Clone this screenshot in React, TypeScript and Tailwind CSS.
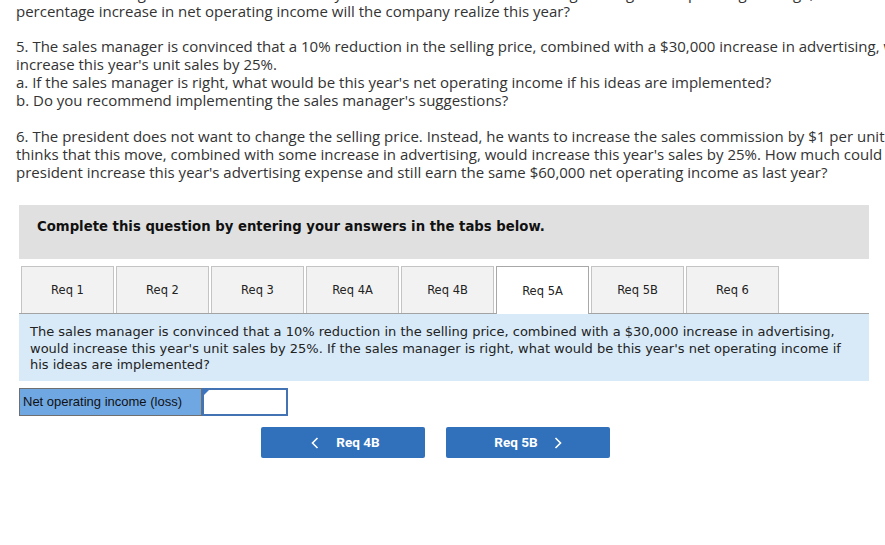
const tabs = ["Req 1", "Req 2", "Req 3", "Req 4A", "Req 4B", "Req 5A", "Req 5B", "Req 6"];
const active = "Req 5A";

function Chevron({ dir }: { dir: "left" | "right" }) {
  return (
    <svg width="8" height="12" viewBox="0 0 8 12" aria-hidden>
      <polyline
        points={dir === "left" ? "6.5,1 1.5,6 6.5,11" : "1.5,1 6.5,6 1.5,11"}
        fill="none"
        stroke="white"
        strokeWidth="1.6"
      />
    </svg>
  );
}

export default function App() {
  return (
    <div className="h-[545px] w-[885px] overflow-hidden bg-white">
      {/* Problem text */}
      <div className="-mt-[16px] whitespace-nowrap pl-4 font-['Open_Sans',Arial,sans-serif] text-[15px] leading-[18px] text-[#333]">
        <div>4. Refer to the original data. Assume that this year's sales increase by 20%. Using the degree of operating leverage, what</div>
        <div>percentage increase in net operating income will the company realize this year?</div>
        <div className="h-[17px]" />
        <div>5. The sales manager is convinced that a 10% reduction in the selling price, combined with a $30,000 increase in advertising, would</div>
        <div>increase this year's unit sales by 25%.</div>
        <div>a. If the sales manager is right, what would be this year's net operating income if his ideas are implemented?</div>
        <div>b. Do you recommend implementing the sales manager's suggestions?</div>
        <div className="h-[18px]" />
        <div>6. The president does not want to change the selling price. Instead, he wants to increase the sales commission by $1 per unit. He</div>
        <div>thinks that this move, combined with some increase in advertising, would increase this year's sales by 25%. How much could the</div>
        <div>president increase this year's advertising expense and still earn the same $60,000 net operating income as last year?</div>
      </div>

      <div className="ml-[19px] mt-[24px] w-[850px]">
        {/* Instruction bar */}
        <div className="h-[54px] bg-[#e0e0e0] pl-[18px] pt-[14px] font-['DejaVu_Sans',Verdana,sans-serif] text-[13.25px] font-bold leading-4 text-[#111]">
          Complete this question by entering your answers in the tabs below.
        </div>

        {/* Tabs */}
        <div className="mt-[7px] flex h-[48px] gap-[2px] border-b border-[#a3a3a3] pl-[2px]">
          {tabs.map((t) => (
            <div
              key={t}
              className={
                t === active
                  ? "relative -mb-px flex w-[93px] items-center justify-center border border-b-0 border-[#a8a8a8] bg-white pt-[2px] font-['DejaVu_Sans',Verdana,sans-serif] text-[11.5px] text-[#222]"
                  : "flex w-[93px] items-center justify-center border border-b-0 border-[#c4c4c4] bg-[#f2f2f2] pt-[2px] font-['DejaVu_Sans',Verdana,sans-serif] text-[11.5px] text-[#222]"
              }
            >
              {t}
            </div>
          ))}
        </div>

        {/* Question panel */}
        <div className="h-[67px] bg-[#d8eaf8] pl-[11px] pt-[10px] font-['DejaVu_Sans',Verdana,sans-serif] text-[13px] leading-[16.5px] text-[#222]">
          The sales manager is convinced that a 10% reduction in the selling price, combined with a $30,000 increase in advertising,
          <br />
          would increase this year's unit sales by 25%. If the sales manager is right, what would be this year's net operating income if
          <br />
          his ideas are implemented?
        </div>

        {/* Answer row */}
        <div className="mt-[7px] flex h-[28px] w-[269px]">
          <div className="flex w-[183px] items-center border border-[#6f6f6f] bg-[#6fa7e3] pl-[3px] font-['Liberation_Sans',Arial,sans-serif] text-[13px] text-[#111]">
            Net operating income (loss)
          </div>
          <div className="relative w-[86px] border-2 border-[#4473b3] bg-white">
            <div className="absolute left-0 top-0 h-0 w-0 border-r-[5px] border-t-[5px] border-r-transparent border-t-[#3b76c4]" />
          </div>
        </div>

        {/* Navigation buttons */}
        <div className="ml-[242px] mt-[11px] flex gap-[21px] font-['Roboto',Arial,sans-serif] text-[13.5px] font-bold text-white">
          <div className="flex h-[31px] w-[164px] items-center justify-center gap-[17px] rounded-[2px] bg-[#3171bc] pl-[5px]">
            <Chevron dir="left" />
            <span>Req 4B</span>
          </div>
          <div className="flex h-[31px] w-[164px] items-center justify-center gap-[16px] rounded-[2px] bg-[#3171bc]">
            <span>Req 5B</span>
            <Chevron dir="right" />
          </div>
        </div>
      </div>
    </div>
  );
}
